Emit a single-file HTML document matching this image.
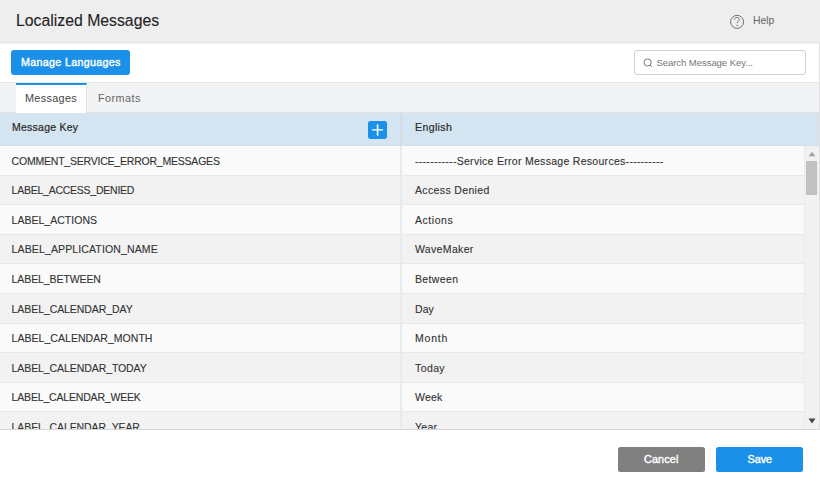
<!DOCTYPE html>
<html><head><meta charset="utf-8">
<style>
*{box-sizing:border-box;margin:0;padding:0}
html,body{width:820px;height:489px;overflow:hidden;background:#fff;font-family:"Liberation Sans",sans-serif;color:#333}
.a{position:absolute;white-space:pre;line-height:1}
#hdr{position:absolute;left:0;top:0;width:820px;height:44px;background:#eeeeee;border-bottom:1px solid #f2f3f3;box-shadow:inset 0 -1px 0 #e3e5e5}
#tool{position:absolute;left:0;top:44px;width:820px;height:39px;background:#fff;border-bottom:1px solid #e6e6e6}
#tabs{position:absolute;left:0;top:83px;width:819px;height:30px;background:#f2f3f5;border-bottom:1px solid #e3e4e6}
#rb{position:absolute;left:819px;top:43px;width:1px;height:387px;background:#e0e0e0}
.btn{position:absolute;background:#1b90e9;border-radius:3px}
#thead{position:absolute;left:0;top:113px;width:819px;height:33px;background:#d4e5f1;border-bottom:1px solid #d4dfe6}
.row{position:absolute;left:0;width:804px;border-bottom:1px solid #e5e9ec}
.r0{background:#fafafa}.r1{background:#f2f2f2}
.t{font-size:10.5px;color:#333;-webkit-text-stroke:0.12px #333}
.lc{letter-spacing:0.4px}
</style></head><body>
<div id="hdr"></div>
<div class="a" style="left:16px;top:12.5px;font-size:15.8px;color:#222;-webkit-text-stroke:0.1px #222">Localized Messages</div>
<svg style="position:absolute;left:729px;top:14px" width="16" height="16" viewBox="0 0 16 16">
<circle cx="8.1" cy="7.85" r="6.5" fill="none" stroke="#707070" stroke-width="1"/>
<path d="M5.6 5.6C5.6 4.2 6.7 3.5 8 3.5C9.3 3.5 10.3 4.3 10.3 5.4C10.3 6.9 8.2 7.3 8.2 9.1" fill="none" stroke="#707070" stroke-width="0.95"/>
<rect x="7.3" y="10.9" width="1.6" height="0.9" fill="#707070"/>
</svg>
<div class="a" style="left:753px;top:16.2px;font-size:10.4px;color:#666">Help</div>

<div id="tool"></div>
<div class="btn" style="left:11px;top:50px;width:119px;height:25px"></div>
<div class="a" style="left:21px;top:56.8px;font-size:10.7px;color:#fff;-webkit-text-stroke:0.4px #fff;letter-spacing:0.33px">Manage Languages</div>
<div style="position:absolute;left:634px;top:50px;width:172px;height:25px;border:1px solid #cfcfcf;border-radius:3px;background:#fff"></div>
<svg style="position:absolute;left:642px;top:57px" width="12" height="12" viewBox="0 0 12 12">
<circle cx="5.6" cy="5.5" r="3.6" fill="none" stroke="#737373" stroke-width="0.95"/>
<path d="M8.2 8.1L9.9 9.8" stroke="#737373" stroke-width="1"/>
</svg>
<div class="a" style="left:656.5px;top:57.5px;font-size:9.6px;color:#777;letter-spacing:-0.1px">Search Message Key...</div>

<div id="tabs"></div>
<div style="position:absolute;left:16px;top:83px;width:71px;height:30px;background:#fff;border-top:2px solid #1b90e9;border-right:1px solid #e4e4e4"></div>
<div class="a" style="left:25px;top:92.6px;font-size:10.9px;color:#444;letter-spacing:0.3px">Messages</div>
<div class="a" style="left:98px;top:92.6px;font-size:10.9px;color:#666;letter-spacing:0.4px">Formats</div>

<div id="thead"></div>
<div class="a t" style="left:12px;top:121.8px;color:#2a2a2a;-webkit-text-stroke:0.22px #2a2a2a;letter-spacing:0.25px">Message Key</div>
<div class="btn" style="left:368px;top:121px;width:18.5px;height:18px;border-radius:2.5px"></div>

<svg style="position:absolute;left:368px;top:121px" width="19" height="18" viewBox="0 0 19 18"><rect x="4.1" y="8.1" width="11" height="1.5" fill="#fff" fill-opacity="0.85"/><rect x="8.8" y="3.4" width="1.6" height="11.2" fill="#fff"/></svg>
<div style="position:absolute;left:400px;top:113px;width:2px;height:33px;background:#d3dce2"></div>
<div class="a t lc" style="left:415px;top:121.8px;color:#2a2a2a;-webkit-text-stroke:0.22px #2a2a2a">English</div>

<div id="rowsbox" style="position:absolute;left:0;top:146px;width:804px;height:283px;overflow:hidden">
<div class="row r0" style="top:0.0px;height:29.6px"></div>
<div class="a t" style="left:11.6px;top:9.65px;letter-spacing:-0.214px">COMMENT_SERVICE_ERROR_MESSAGES</div>
<div class="a t" style="left:415px;top:9.65px;letter-spacing:0.292px">-----------Service Error Message Resources----------</div>
<div class="row r1" style="top:29.6px;height:29.6px"></div>
<div class="a t" style="left:11.6px;top:39.25px;letter-spacing:-0.244px">LABEL_ACCESS_DENIED</div>
<div class="a t" style="left:415px;top:39.25px;letter-spacing:0.358px">Access Denied</div>
<div class="row r0" style="top:59.2px;height:29.6px"></div>
<div class="a t" style="left:11.6px;top:68.85px;letter-spacing:0.017px">LABEL_ACTIONS</div>
<div class="a t" style="left:415px;top:68.85px;letter-spacing:0.55px">Actions</div>
<div class="row r1" style="top:88.8px;height:29.6px"></div>
<div class="a t" style="left:11.6px;top:98.45px;letter-spacing:0.129px">LABEL_APPLICATION_NAME</div>
<div class="a t" style="left:415px;top:98.45px;letter-spacing:0.337px">WaveMaker</div>
<div class="row r0" style="top:118.4px;height:29.6px"></div>
<div class="a t" style="left:11.6px;top:128.05px;letter-spacing:-0.092px">LABEL_BETWEEN</div>
<div class="a t" style="left:415px;top:128.05px;letter-spacing:0.367px">Between</div>
<div class="row r1" style="top:148.0px;height:29.6px"></div>
<div class="a t" style="left:11.6px;top:157.65px;letter-spacing:-0.076px">LABEL_CALENDAR_DAY</div>
<div class="a t" style="left:415px;top:157.65px;letter-spacing:0.05px">Day</div>
<div class="row r0" style="top:177.6px;height:29.6px"></div>
<div class="a t" style="left:11.6px;top:187.25px;letter-spacing:0.042px">LABEL_CALENDAR_MONTH</div>
<div class="a t" style="left:415px;top:187.25px;letter-spacing:0.8px">Month</div>
<div class="row r1" style="top:207.2px;height:29.6px"></div>
<div class="a t" style="left:11.6px;top:216.85px;letter-spacing:-0.084px">LABEL_CALENDAR_TODAY</div>
<div class="a t" style="left:415px;top:216.85px;letter-spacing:0.4px">Today</div>
<div class="row r0" style="top:236.8px;height:29.6px"></div>
<div class="a t" style="left:11.6px;top:246.45px;letter-spacing:-0.178px">LABEL_CALENDAR_WEEK</div>
<div class="a t" style="left:415px;top:246.45px;letter-spacing:0.2px">Week</div>
<div class="row r1" style="top:266.4px;height:29.6px"></div>
<div class="a t" style="left:11.6px;top:276.05px;letter-spacing:-0.1px">LABEL_CALENDAR_YEAR</div>
<div class="a t" style="left:415px;top:276.05px;letter-spacing:0.3px">Year</div>
</div>
<div style="position:absolute;left:400px;top:146px;width:1px;height:283px;background:#e9edf0"></div><div style="position:absolute;left:401px;top:146px;width:1px;height:283px;background:#e3e8eb"></div>

<!-- scrollbar -->
<div style="position:absolute;left:804px;top:146px;width:15px;height:283px;background:#f1f1f1;border-left:1px solid #e8ecee"></div>
<div style="position:absolute;left:806px;top:161px;width:11px;height:34px;background:#c1c1c1"></div>
<svg style="position:absolute;left:804px;top:146px" width="16" height="283" viewBox="0 0 16 283">
<path d="M4.6 10.2L8 5.8L11.4 10.2Z" fill="#a3a3a3"/>
<path d="M4.5 272.6L8 277.4L11.5 272.6Z" fill="#484848"/>
</svg>
<div id="rb"></div>
<div style="position:absolute;left:0;top:429px;width:820px;height:1px;background:#d6d6d6"></div>

<div style="position:absolute;left:618px;top:447px;width:87px;height:24.6px;background:#808080;border-radius:2.5px"></div>
<div class="a" style="left:644px;top:453.5px;font-size:10.8px;color:#fff;-webkit-text-stroke:0.4px #fff;letter-spacing:0.15px">Cancel</div>
<div class="btn" style="left:716px;top:447px;width:86.6px;height:24.6px;border-radius:2.5px"></div>
<div class="a" style="left:747.5px;top:453.5px;font-size:10.8px;color:#fff;-webkit-text-stroke:0.4px #fff;letter-spacing:0px">Save</div>

</body></html>
